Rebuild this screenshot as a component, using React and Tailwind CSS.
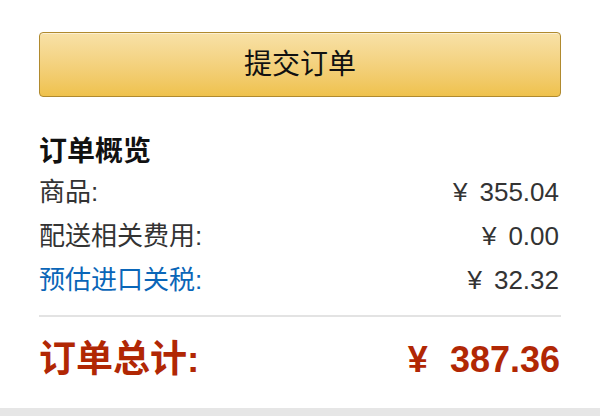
const rows = [
  { label: "商品:", value: "355.04", link: false },
  { label: "配送相关费用:", value: "0.00", link: false },
  { label: "预估进口关税:", value: "32.32", link: true },
];

const font = { fontFamily: '"Liberation Sans", "Noto Sans CJK SC", sans-serif' };

export default function App() {
  return (
    <div className="w-[600px] h-[416px] bg-[#e6e6e6]" style={font}>
      <div className="h-[408px] bg-white px-[39px] pt-[32px]">
        <button className="w-full h-[65px] rounded-[4px] border border-[#b08a2e] bg-gradient-to-b from-[#f8e1a7] to-[#efc24c] text-[28px] text-[#111] shadow-[inset_0_1px_0_rgba(255,255,255,0.5)]">
          提交订单
        </button>

        <h2 className="mt-[37px] text-[28px] leading-[36px] font-bold text-[#111]">订单概览</h2>

        {rows.map((r) => (
          <div key={r.label} className="flex justify-between items-center h-[44px]">
            <span className={`text-[26px] ${r.link ? "text-[#0a66b8]" : "text-[#333]"}`}>{r.label}</span>
            <span className="flex items-center text-[26px] text-[#333] pr-[2px]">
              <span>¥</span>
              <span className="ml-[12px]">{r.value}</span>
            </span>
          </div>
        ))}

        <div className="mt-[13px] h-[2px] bg-[#e3e3e3]" />

        <div className="mt-[25px] flex justify-between items-center h-[36px] font-bold text-[#b12704]">
          <span className="text-[37px]">订单总计:</span>
          <span className="flex items-center text-[36px] pr-[1px]">
            <span>¥</span>
            <span className="ml-[22px]">387.36</span>
          </span>
        </div>
      </div>
    </div>
  );
}
